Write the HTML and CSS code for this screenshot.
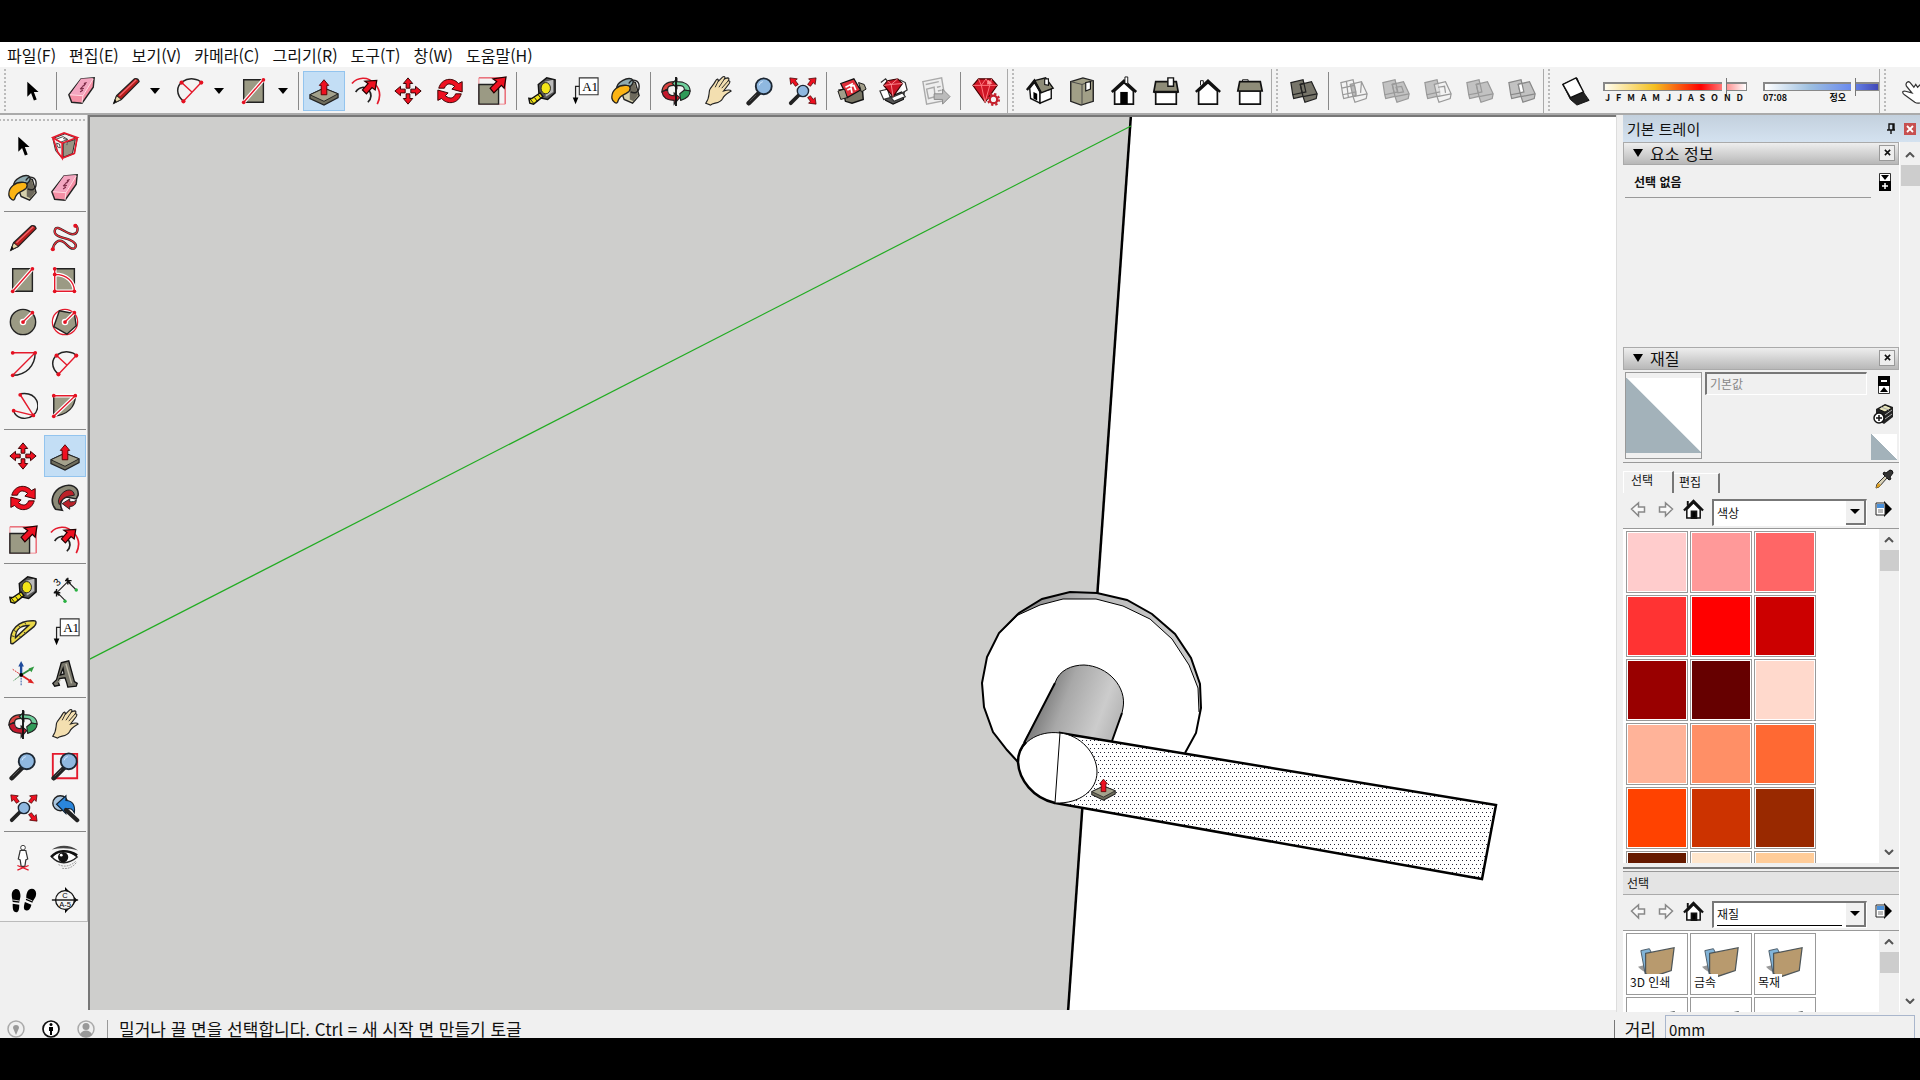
FILE: index.html
```html
<!DOCTYPE html>
<html lang="ko">
<head>
    <meta charset="UTF-8">
    <meta name="viewport" content="width=device-width, initial-scale=1.0">
    <title>SketchUp</title>
    <link rel="stylesheet" href="styles.css">
</head>
<body>

<!-- Icon set -->
<svg class="icon-set" aria-hidden="true">
    <defs>
        <g id="red-arrow"><path d="M16 2l5 6h-3v5h-4V8h-3z" fill="#ee1020" stroke="#300" stroke-width="1"/></g>
        <g id="glass"><path d="M15 18L4 29" stroke="#222" stroke-width="5" stroke-linecap="round"/><path d="M12 20l-7 7" stroke="#555" stroke-width="1"/><circle cx="20" cy="11" r="8.500" fill="#8fb8e0" stroke="#1c2733" stroke-width="2"/><path d="M15 10a5 5 0 0 1 4-4" stroke="#d8eaff" fill="none"/></g>
        <g id="big-red-arrow"><path d="M30 2l-2 12-4-3-7 8-5-5 7-8-4-3z" fill="#ee1020" stroke="#200" stroke-width="1.500"/></g>
    </defs>
    <symbol id="i-select" viewBox="0 0 32 32"><path d="M11 6v16l4-4 3 8 3-1-3-8h5z"/></symbol>
    <symbol id="i-component" viewBox="0 0 32 32"><path d="M3 8l13-5 13 5-3 16-13 5-7-8z" fill="#eee" stroke="#222"/><path d="M14 13l13-4-3 15-10 4z" fill="#999585" stroke="#222"/><path d="M6 9l8-3 5 3-8 3zM7 13l3 1 1 4-3-1zM14 8l4 1v6" fill="#fff" stroke="#444"/><path d="M3 7l12-5 14 5-16 6zM3 7l5 15 5 7V13M13 29l13-5 3-17" fill="none" stroke="#e41a2c" stroke-width="1.800"/></symbol>
    <symbol id="i-paint" viewBox="0 0 32 32"><path d="M10 14l4 11 9 4 7-8-4-14-8-3z" fill="#d6d0ac" stroke="#222" stroke-width="1.500"/><path d="M20 10l5-3 4 13-5 7-4-2z" fill="#6d695c"/><ellipse cx="15" cy="9" rx="9.500" ry="5" transform="rotate(-28 15 9)" fill="#8fabb0" stroke="#222" stroke-width="1.500"/><path d="M19 8c3-6 11-4 11 3s-5 8-9 6" fill="none" stroke="#222" stroke-width="1.500"/><path d="M17 10C8 9 0 15 1 24c1 4 5 6 6 4 2-7 5-7 10-10 5-3 4-8 0-8z" fill="#fbb414" stroke="#222" stroke-width="1.400"/></symbol>
    <symbol id="i-eraser" viewBox="0 0 32 32"><path d="M2 20L15 3l14-1-1 10-12 17-11-1z" fill="#f58fa5" stroke="#222" stroke-width="1.500"/><path d="M3 20L15 3l13-1-11 18z" fill="#f4a6c0"/><path d="M3 20l14 1L28 3M17 21l-1 8" stroke="#ffe0e6" fill="none"/><path d="M14 17l3-2M15 14l3-1M16 11l3-1M18 8l3-1M14 14l6-6" stroke="#7b2b45" stroke-width="1.200"/></symbol>
    <symbol id="i-pencil" viewBox="0 0 32 32"><path d="M3 29l3-8L25 3q4-1 5 3L11 25z" fill="#b81c1c" stroke="#222" stroke-width="1.300"/><path d="M9 21L27 4" stroke="#f0656a" stroke-width="1.500"/><path d="M3 29l3-8 5 4z" fill="#e9d9a8" stroke="#222"/><path d="M3 29l1-4 2 2z"/></symbol>
    <symbol id="i-freehand" viewBox="0 0 32 32"><path d="M3 28c1-7 6-11 11-8 5 3 7 9 12 7 4-3 0-7-5-9C12 15 4 14 5 8c2-8 12 4 19 4 6 0 7-7 3-10" fill="none" stroke="#222" stroke-width="2.500"/><path d="M3 28c1-7 6-11 11-8 5 3 7 9 12 7 4-3 0-7-5-9C12 15 4 14 5 8c2-8 12 4 19 4 6 0 7-7 3-10" fill="none" stroke="#e8303a" stroke-width="1.400"/><circle cx="3" cy="28" r="2.200" fill="#e41020"/><circle cx="27" cy="3" r="2.200" fill="#e41020"/></symbol>
    <symbol id="i-rect" viewBox="0 0 32 32"><path d="M5 4h21v24H5z" fill="#9b9a84" stroke="#222" stroke-width="1.500"/><path d="M5 28L26 4" stroke="#fff" stroke-width="4"/><path d="M5 28L26 4" stroke="#e41a2c" stroke-width="1.500"/><circle cx="5" cy="28" r="2" fill="#e41020"/><circle cx="26" cy="4" r="2" fill="#e41020"/></symbol>
    <symbol id="i-rotrect" viewBox="0 0 32 32"><path d="M5 4h21v24H5z" fill="#9b9a84" stroke="#222" stroke-width="1.500"/><path d="M5 4v24h21c0-10-8-18-21-18" fill="none" stroke="#fff" stroke-width="4"/><path d="M5 4v24h21c0-10-8-18-21-18" fill="none" stroke="#e41a2c" stroke-width="1.500"/><circle cx="5" cy="4" r="2" fill="#e41020"/><circle cx="5" cy="10" r="2" fill="#e41020"/><circle cx="5" cy="28" r="2" fill="#e41020"/><circle cx="26" cy="28" r="2" fill="#e41020"/></symbol>
    <symbol id="i-circle" viewBox="0 0 32 32"><circle cx="16" cy="16" r="13.500" fill="#9b9a84" stroke="#222" stroke-width="1.500"/><path d="M16 16L26 6" stroke="#fff" stroke-width="4"/><circle cx="16" cy="16" r="3.500" fill="#fff"/><path d="M16 16L26 6" stroke="#e41a2c" stroke-width="1.500"/><circle cx="16" cy="16" r="2" fill="#e41020"/><circle cx="26" cy="6" r="2" fill="#e41020"/></symbol>
    <symbol id="i-polygon" viewBox="0 0 32 32"><circle cx="16" cy="16" r="13.500" fill="#fff" stroke="#e41a2c" stroke-width="1.300"/><path d="M10 4l16 3 2 13-10 9-14-8z" fill="#9b9a84" stroke="#222" stroke-width="1.500"/><path d="M16 16L26 6" stroke="#fff" stroke-width="4"/><circle cx="16" cy="16" r="3.500" fill="#fff"/><path d="M16 16L26 6" stroke="#e41a2c" stroke-width="1.500"/><circle cx="16" cy="16" r="2" fill="#e41020"/><circle cx="26" cy="6" r="2" fill="#e41020"/></symbol>
    <symbol id="i-arc" viewBox="0 0 32 32"><path d="M29 4c0 14-10 24-24 24" fill="none" stroke="#222" stroke-width="1.500"/><path d="M5 28L29 4H5" fill="none" stroke="#e41a2c" stroke-width="1.500"/><circle cx="5" cy="4" r="2" fill="#e41020"/><circle cx="29" cy="4" r="2" fill="#e41020"/><circle cx="5" cy="28" r="2" fill="#e41020"/></symbol>
    <symbol id="i-arc2" viewBox="0 0 32 32"><path d="M9 27C1 20 1 11 8 6s17-3 20 1" fill="none" stroke="#222" stroke-width="1.600"/><path d="M9 27L28 7M7 7l11 10" stroke="#e41a2c" stroke-width="1.500"/><circle cx="9" cy="27" r="2.200" fill="#e41020"/><circle cx="28" cy="7" r="2.200" fill="#e41020"/><circle cx="7" cy="7" r="2.200" fill="#e41020"/></symbol>
    <symbol id="i-arc3" viewBox="0 0 32 32"><path d="M13 3c18-3 24 14 14 23-8 6-19 3-21-5" fill="none" stroke="#222" stroke-width="1.500"/><path d="M13 4l14 22-21-5" fill="none" stroke="#e41a2c" stroke-width="1.500"/><circle cx="13" cy="4" r="2" fill="#e41020"/><circle cx="27" cy="26" r="2" fill="#e41020"/><circle cx="6" cy="21" r="2" fill="#e41020"/></symbol>
    <symbol id="i-pie" viewBox="0 0 32 32"><path d="M4 5h23c0 12-8 20-23 22z" fill="#9b9a84" stroke="#222" stroke-width="1.500"/><path d="M4 5h23L4 27" fill="none" stroke="#fff" stroke-width="4"/><path d="M4 5h23L4 27" fill="none" stroke="#e41a2c" stroke-width="1.500"/><circle cx="4" cy="5" r="2" fill="#e41020"/><circle cx="27" cy="5" r="2" fill="#e41020"/><circle cx="4" cy="27" r="2" fill="#e41020"/></symbol>
    <symbol id="i-push" viewBox="0 0 32 32"><path d="M1 20l15-7 15 6v4L16 31 1 24z" fill="#6f6d5c" stroke="#222" stroke-width="1.300"/><path d="M1 20l15-7 15 6-15 8z" fill="#a4a28c" stroke="#222"/><path d="M16 4l5 6h-2v10h-6V10h-2z" fill="#ee1020" stroke="#500" stroke-width="1"/></symbol>
    <symbol id="i-offset" viewBox="0 0 32 32"><path d="M1 8c6-7 17-8 24 0 6 6 7 14 3 22" fill="none" stroke="#e41a2c" stroke-width="1.800"/><path d="M5 17c4-6 10-6 14-2 3 4 3 9-1 13" fill="none" stroke="#222" stroke-width="1.800"/><use href="#big-red-arrow" transform="translate(2 3) scale(.85)"/></symbol>
    <symbol id="i-move" viewBox="0 0 32 32"><use href="#red-arrow"/><use href="#red-arrow" transform="rotate(90 16 16)"/><use href="#red-arrow" transform="rotate(180 16 16)"/><use href="#red-arrow" transform="rotate(270 16 16)"/></symbol>
    <symbol id="i-rotate" viewBox="0 0 32 32"><path id="rot" d="M4 13C7 2 19 1 25 8l4-2v11l-11-3 3-3c-5-4-9-3-11 2z" fill="#ee1020" stroke="#300" stroke-width="1"/><use href="#rot" transform="rotate(180 16 16)"/></symbol>
    <symbol id="i-scale" viewBox="0 0 32 32"><path d="M2 2h28v28" fill="none" stroke="#e41a2c"/><path d="M2 2v28h28" fill="none" stroke="#f08890"/><path d="M2 9h21v21H2z" fill="#9b9a84" stroke="#222" stroke-width="1.500"/><path d="M31 1l-2 12-3-3-8 8-4-5 7-7-4-3z" fill="#ee1020" stroke="#200" stroke-width="1.300"/></symbol>
    <symbol id="i-followme" viewBox="0 0 32 32"><path d="M30 13C31 4 22 0 13 4 3 8-1 20 6 28l7 1c-3-5-2-12 5-14l10 2z" fill="#8c8a78" stroke="#222" stroke-width="1.700"/><path d="M26 13c-1-7-8-7-13-2-4 5-5 9-3 12 2-6 6-8 10-9z" fill="#bb2229" stroke="#222"/><path d="M13 22l8-5v3c3 0 6 0 7-2 0 5-3 7-7 7v3z" fill="#bb2229" stroke="#222"/></symbol>
    <symbol id="i-tape" viewBox="0 0 32 32"><path d="M12 9l9-7 9 2v14l-8 7-9-2z" fill="#555" stroke="#111" stroke-width="1.500"/><path d="M19 6l9-2v13l-8 5z" fill="#bbb"/><ellipse cx="20" cy="13" rx="5" ry="6" fill="#f2e418" stroke="#222"/><path d="M14 18l3 4-10 8-4-1-1-5h3z" fill="#f2e418" stroke="#111" stroke-width="1.500"/><path d="M2 23l5 6M8 23l3 4M12 20l3 4" stroke="#111"/></symbol>
    <symbol id="i-dim" viewBox="0 0 32 32"><path d="M7 19L19 7M18 6l10 10M7 18l9 9" stroke="#222" stroke-width="1.200"/><path d="M4 19h7M7 15v8M5 17l5 5M16 6h7M19 3v7M17 4l5 5" stroke="#111" stroke-width="1.500"/><circle cx="28" cy="16" r="1.800" fill="#28b040"/><circle cx="16" cy="28" r="1.800" fill="#28b040"/><text x="4" y="11" font-family="Liberation Sans" font-size="11" transform="rotate(-45 8 7)">3</text></symbol>
    <symbol id="i-protractor" viewBox="0 0 32 32"><path fill-rule="evenodd" d="M3 28C1 14 11 3 28 4c3 0 2 4 0 6L6 28q-2 1-3 0zM8 22L22 9C13 9 8 14 8 22z" fill="#ead84a" stroke="#222" stroke-width="1.500"/><path d="M4 20l3 1M6 14l3 2M11 9l2 2M18 6l1 2M12 20l2 2M17 16l2 2" stroke="#333"/></symbol>
    <symbol id="i-text" viewBox="0 0 32 32"><path d="M11 2h20v18H11z" fill="#fff" stroke="#333" stroke-width="1.200"/><path d="M11 11H7v13" fill="none" stroke="#222" stroke-width="1.300"/><path d="M4 23h6l-3 7z"/><text x="14" y="16" font-family="Liberation Serif" font-size="14">A1</text></symbol>
    <symbol id="i-axes" viewBox="0 0 32 32"><path d="M14 17V6" stroke="#1e4b9c" stroke-width="2.500"/><path d="M14 2l3 6h-6z" fill="#1e4b9c"/><path d="M14 17l10-6" stroke="#2f8a3f" stroke-width="2"/><path d="M28 8l-3 6-3-4z" fill="#2f9a3f"/><path d="M14 17l9 6" stroke="#d22" stroke-width="2"/><path d="M28 26l-7-1 3-4z" fill="#d22"/><path d="M14 17v11" stroke="#1e4b9c" stroke-dasharray="2 1"/><path d="M14 17l-8 6" stroke="#2f8a3f" stroke-dasharray="2 1"/><path d="M14 17l-9-6" stroke="#d22" stroke-dasharray="2 1"/><circle cx="14" cy="17" r="2"/></symbol>
    <symbol id="i-3dtext" viewBox="0 0 32 32"><path fill-rule="evenodd" d="M12 4l8-2 6 22 3 2-1 3-9 1-1-4-2-6-6 1-1 4 1 3-5 1-2-3 4-4zM14 10l-3 7 4-1z" fill="#77756a" stroke="#111" stroke-width="1.400"/><path d="M17 5l6 21M11 22l-2 3" stroke="#bdb9a8" stroke-width="1.500"/></symbol>
    <symbol id="i-orbit" viewBox="0 0 32 32"><path d="M14 6C5 6 1 11 1 17l6-3c0-3 3-4 7-4z" fill="#d9433f" stroke="#222" stroke-width="1.200"/><path d="M1 17c1 6 5 9 13 9v4l6-7-6-5v3c-6 0-7-3-7-7z" fill="#c4182c" stroke="#222" stroke-width="1.200"/><path d="M17 6v-3l-5 5 5 5v-3c6 0 8 1 8 5l6 1c0-7-6-10-14-10z" fill="#6fcf9c" stroke="#222" stroke-width="1.200"/><path d="M25 15l-5 4 1 7c7-2 10-6 10-10z" fill="#2f9a58" stroke="#222" stroke-width="1.200"/><path d="M16 1v31" stroke="#111" stroke-width="2"/></symbol>
    <symbol id="i-hand" viewBox="0 0 32 32"><path d="M3 29c4-5 3-9 4-14 1-3 4-5 6-9 2-4 4-3 3 0l5-5c2-1 3 0 2 2l3-1c2 0 2 1 1 3 2 0 2 1 1 3l-6 8c3-1 7-2 8 0-5 3-8 5-9 8-3 6-10 4-13 7z" fill="#f3dfb0" stroke="#222" stroke-width="1.200"/><path d="M16 6l-3 6M23 3l-6 9M27 5l-7 8" stroke="#222"/></symbol>
    <symbol id="i-zoom" viewBox="0 0 32 32"><use href="#glass"/></symbol>
    <symbol id="i-zoomwin" viewBox="0 0 32 32"><path d="M3 3h26v26H3z" fill="none" stroke="#e41a2c" stroke-width="2"/><use href="#glass"/></symbol>
    <symbol id="i-extents" viewBox="0 0 32 32"><path d="M13 20L4 29" stroke="#222" stroke-width="4" stroke-linecap="round"/><circle cx="17" cy="16" r="6" fill="#8fb8e0" stroke="#1c2733" stroke-width="1.500"/><g fill="#ee1020" stroke="#400" stroke-width=".8"><path d="M3 2l8 1-2 2 3 4-3 2-3-4-2 2z"/><path d="M31 2l-8 1 2 2-3 4 3 2 3-4 2 2z"/><path d="M31 30l-8-1 2-2-3-4 3-2 3 4 2-2z"/></g></symbol>
    <symbol id="i-prev" viewBox="0 0 32 32"><circle cx="11" cy="11" r="8" fill="#a9c6e0" stroke="#222" stroke-width="1.500"/><path d="M7 12l10-9v5c7 0 10 5 9 13-2-4-4-5-9-4v5z" fill="#2a86dd" stroke="#123" stroke-width="1.200"/><path d="M17 18l12 11" stroke="#222" stroke-width="4.500" stroke-linecap="round"/></symbol>
    <symbol id="i-position" viewBox="0 0 32 32"><circle cx="16" cy="5" r="2.500" fill="#fff" stroke="#333"/><path d="M13 8h6l2 9-2 1-1 7h-4l-1-7-2-1z" fill="#fff" stroke="#333" stroke-width="1.300"/><path d="M10 29l12-5M10 24l12 5" stroke="#e41a2c" stroke-width="1.400"/></symbol>
    <symbol id="i-look" viewBox="0 0 32 32"><path d="M2 7C9 2 20 1 30 8 20 5 11 5 2 7z" fill="#444"/><path d="M2 15c7-8 18-8 27 0-9 8-20 8-27 0z" fill="#fff" stroke="#222" stroke-width="1.500"/><path d="M1 15c7-8 18-8 28-2" fill="none" stroke="#111" stroke-width="2.500"/><circle cx="14" cy="15" r="5.500" fill="#111"/><circle cx="12" cy="13" r="1.500" fill="#fff"/><path d="M9 23c6 3 13 2 19-4M13 27c6 1 11-1 15-6" stroke="#999" fill="none" stroke-dasharray="2 1"/></symbol>
    <symbol id="i-walk" viewBox="0 0 32 32"><path d="M4 11c0-8 8-9 9-2 1 5-1 6-1 10l-7-1c0-3-1-4-1-7zM5 20l7 1c0 6-1 8-3 8-4 0-4-4-4-9z"/><path d="M20 9c2-7 10-6 10 0 0 5-3 6-4 10l-7-3c1-3 0-4 1-7zM18 18l7 3c-1 5-4 7-6 6-3-1-2-5-1-9z"/><path d="M5 16l7 1M19 14l7 3" stroke="#ddd"/></symbol>
    <symbol id="i-section" viewBox="0 0 32 32"><path d="M16 2l13 14-13 14z"/><circle cx="16" cy="16" r="10" fill="#f4f4f4" stroke="#111" stroke-width="1.400"/><path d="M2 16h28" stroke="#111" stroke-width="1.500"/><text x="16" y="14" font-family="Liberation Sans" font-size="8" text-anchor="middle">C</text><text x="16" y="23" font-family="Liberation Sans" font-size="8" text-anchor="middle">A-5</text></symbol>
    <symbol id="i-warehouse" viewBox="0 0 32 32"><path d="M3 15l4 3 2 9 7 2 12-4-1-13z" fill="#777463" stroke="#111" stroke-width="1.500"/><path d="M4 8l14-5 7 12-14 8z" fill="#e0303a" stroke="#111" stroke-width="1.300"/><path d="M9 12l8-4M14 11l4-1 2 5M11 15l4-2 1 5" stroke="#fff" stroke-width="1.800" fill="none"/><path d="M1 16l7-2 3 9-7 2zM23 7l6 2 2 5-5 3z" fill="#a19d89" stroke="#111"/></symbol>
    <symbol id="i-extwh" viewBox="0 0 32 32"><path d="M4 17l8 5 15-6-1 9-11 5-8-4z" fill="#555" stroke="#111" stroke-width="1.300"/><path d="M2 7l5-4 4 5M22 4l6 3 2 8-5 3M1 16l8-2 3 9-7 2zM13 23l12-5 3 4-12 5z" fill="#fff" stroke="#333" stroke-width="1.300"/><path d="M5 10l4-5 11-2 5 5-10 14z" fill="#c81424" stroke="#300" stroke-width="1.200"/><path d="M5 10l8-1 12-1M9 5l4 4 2 13M20 3l-7 6" stroke="#ff8a90" fill="none"/></symbol>
    <symbol id="i-layout" viewBox="0 0 32 32"><path d="M2 6l20-4 4 24-20 4z" fill="#eee" stroke="#aaa" stroke-width="1.500"/><path d="M5 9l14-3M6 14l8-2 1 10-7 2zM17 12l4-1M18 16l4-1" stroke="#aaa" stroke-width="1.500" fill="none"/><path d="M14 19h9v-5l8 8-8 8v-5h-9z" fill="#bbb" stroke="#888"/></symbol>
    <symbol id="i-extmgr" viewBox="0 0 32 32"><path d="M2 10l6-7h14l6 7-13 18z" fill="#cf1525" stroke="#400" stroke-width="1.200"/><path d="M2 10h26M8 3l3 7 4 18 5-18 2-7M11 10l5-7 4 7" stroke="#ff7a80" fill="none"/><path d="M18 4l5 4-6 1z" fill="#f99"/><circle cx="24" cy="25" r="4" fill="#f3f3f3" stroke="#c4202c" stroke-width="2.500"/><circle cx="24" cy="25" r="6" fill="none" stroke="#c4202c" stroke-width="2" stroke-dasharray="2.500 2.200"/></symbol>
    <symbol id="i-iso" viewBox="0 0 32 32"><path d="M5 13l5-6 6 9v13l-10-5z" fill="#fff" stroke="#111" stroke-width="1.500"/><path d="M16 17l12-3v10l-12 5z" fill="#fff" stroke="#111" stroke-width="1.500"/><path d="M10 5l12-3 8 11-13 5z" fill="#8e8c78" stroke="#111" stroke-width="1.500"/><path d="M2 15l8-10 7 13" fill="none" stroke="#111" stroke-width="2.500"/><path d="M21 3h4v7l-4-1z" fill="#fff" stroke="#111" stroke-width="1.200"/><path d="M9 17l4 2v7l-4-2z"/></symbol>
    <symbol id="i-top" viewBox="0 0 32 32"><path d="M4 6l13-4 11 3v22l-13 4-11-4z" fill="#a19f87" stroke="#222" stroke-width="1.500"/><path d="M4 6l12 3v22M16 9l12-4" fill="none" stroke="#444"/><path d="M20 7l5-1v8l-5 2z" fill="#fff" stroke="#111" stroke-width="1.200"/></symbol>
    <symbol id="i-front" viewBox="0 0 32 32"><path d="M6 16L16 7l10 9v14H6z" fill="#fff" stroke="#111" stroke-width="1.800"/><path d="M3 17L16 5l13 12" fill="none" stroke="#111" stroke-width="2.800"/><path d="M12 17h8v13h-8z"/><path d="M17 7V1h3v7" fill="#fff" stroke="#111"/></symbol>
    <symbol id="i-right" viewBox="0 0 32 32"><path d="M5 16h22v14H5z" fill="#fff" stroke="#111" stroke-width="1.800"/><path d="M5 6h22l2 11H3z" fill="#8e8c78" stroke="#111" stroke-width="1.800"/><path d="M3 17h26" stroke="#111" stroke-width="2.500"/><path d="M18 2h6v9h-6z" fill="#fff" stroke="#111" stroke-width="1.500"/></symbol>
    <symbol id="i-back" viewBox="0 0 32 32"><path d="M8 10V5h3v4" fill="#fff" stroke="#111"/><path d="M6 16L16 7l10 9v14H6z" fill="#fff" stroke="#111" stroke-width="1.800"/><path d="M3 17L16 5l13 12" fill="none" stroke="#111" stroke-width="2.500"/></symbol>
    <symbol id="i-left" viewBox="0 0 32 32"><path d="M5 16h22v14H5z" fill="#fff" stroke="#111" stroke-width="1.800"/><path d="M8 4h6v3H8z" stroke="#111" fill="#fff"/><path d="M5 6h22l2 10H3z" fill="#8e8c78" stroke="#111" stroke-width="1.800"/></symbol>
    <symbol id="i-shell" viewBox="0 0 32 32"><g fill="#77756a" stroke="#222" stroke-width="1.300"><path d="M2 7l13-3 3 13v4L5 24l-1-4z"/><path d="M12 9l12-3 6 13-1 5-12 4-2-6z"/><path d="M4 20l14-3M15 22l15-3M12 9l4-1 2 9-4 1z" fill="none"/></g></symbol>
    <symbol id="i-intersect" viewBox="0 0 32 32"><path d="M12 9l5-1 2 13-4 2z" fill="#bbb"/><g fill="none" stroke="#999" stroke-width="1.300"><path d="M2 7l13-3 3 13v4L5 24l-1-4zM4 20l14-3M8 6l2 17M3 13l13-3"/><path d="M12 9l12-3 6 13-1 5-12 4-2-6zM15 22l15-3M24 6l-1 12"/></g></symbol>
    <symbol id="i-union" viewBox="0 0 32 32"><g fill="#c2c2c2" stroke="#999" stroke-width="1.300"><path d="M2 7l13-3 3 13v4L5 24l-1-4z"/><path d="M12 9l12-3 6 13-1 5-12 4-2-6z"/><path d="M4 20l14-3M15 22l15-3M12 9l4-1 2 9-4 1zM16 12l6-1 2 6-6 1z" fill="none"/></g></symbol>
    <symbol id="i-subtract" viewBox="0 0 32 32"><path d="M2 7l13-3 3 13v4L5 24l-1-4z" fill="#c2c2c2" stroke="#999" stroke-width="1.300"/><path d="M12 9l12-3 6 13-1 5-12 4-2-6zM15 22l15-3M4 20l14-3M16 12l7-1 1 7" fill="#f3f3f3" fill-opacity=".6" stroke="#999" stroke-width="1.300"/></symbol>
    <symbol id="i-trim" viewBox="0 0 32 32"><g fill="#c2c2c2" stroke="#999" stroke-width="1.300"><path d="M2 7l13-3 3 13v4L5 24l-1-4z"/><path d="M12 9l12-3 6 13-1 5-12 4-2-6z"/><path d="M4 20l11-2M15 22l15-3M12 9l4-1 2 9-4 1z" fill="none"/></g></symbol>
    <symbol id="i-split" viewBox="0 0 32 32"><g fill="#c2c2c2" stroke="#888" stroke-width="1.300"><path d="M2 7l13-3 3 13v4L5 24l-1-4z"/><path d="M12 9l12-3 6 13-1 5-12 4-2-6z"/><path d="M4 20l11-2M15 22l15-3"/><path d="M12 9l4-1 2 9-4 1z" fill="#fff"/></g></symbol>
    <symbol id="i-shadow" viewBox="0 0 32 32"><path d="M2 9l15-7 6 14 7 10-13 5-7-6z" fill="#222" stroke="#111"/><path d="M2 9l14-7 8 15-14 6z" fill="#fff" stroke="#111" stroke-width="1.500"/></symbol>
    <symbol id="i-touch" viewBox="0 0 32 32"><path d="M12 6c-3 1-3 4-1 6l5 6-8-2c-3 0-2 3 0 4l11 8c3 2 6 1 9-1V12l-3-3-3 3-2-3-2 3-4-5q-1-1-2-1z" fill="#fff" stroke="#333" stroke-width="1.300"/></symbol>
    <symbol id="i-home" viewBox="0 0 22 22"><path d="M4 11v9h14v-9L11 4z" fill="#fff" stroke="#111" stroke-width="1.600"/><path d="M1 12L11 2l10 10" fill="none" stroke="#111" stroke-width="2.400"/><path d="M5 2v5M9 13h5v7H9z" stroke="#111" stroke-width="2"/></symbol>
    <symbol id="i-navleft" viewBox="0 0 18 18"><path d="M2 9l7-6v4h6v5H9v4z" fill="#f8f8f8" stroke="#888" stroke-width="1.500"/></symbol>
    <symbol id="i-detail" viewBox="0 0 18 18"><path d="M9 1l8 8-8 8z"/><path d="M1 3h9v12H1z" fill="#fff" stroke="#222"/><path d="M2 4h7v4H2z" fill="#4a90d9"/><path d="M3 10h5M3 12h5" stroke="#777"/></symbol>
    <symbol id="i-dropper" viewBox="0 0 22 22"><path d="M13 5l4-3q3 0 3 3l-3 4 1 2-2 1-6-6 1-2z" fill="#333" stroke="#111"/><path d="M12 8l2 2-8 9-3 1 1-4z" fill="#d9d2b8" stroke="#333"/><path d="M5 15l3 2-2 2-3 1z" fill="#e0a020"/></symbol>
    <symbol id="i-newmat" viewBox="0 0 22 22"><path d="M3 6l9-5 8 3v10l-9 7-8-5z" fill="#222"/><path d="M5 6l7-4 7 3-7 4z" fill="#e5e3b8" stroke="#111"/><path d="M8 4l8 3M12 12l7-5M12 16l7-5" stroke="#aaa"/><circle cx="6" cy="15" r="5" fill="#fff" stroke="#111" stroke-width="1.500"/><path d="M6 12v6M3 15h6" stroke="#111" stroke-width="1.500"/></symbol>
    <symbol id="i-expand" viewBox="0 0 12 18"><path d="M.5.5h11v17H.5z" fill="#fff" stroke="#333"/><path d="M0 8h12v10H0zM2 2h8L6 7z"/><path d="M6 10v6M3 13h6" stroke="#fff" stroke-width="1.500"/></symbol>
    <symbol id="i-collapse" viewBox="0 0 12 18"><path d="M.5.5h11v17H.5z" fill="#fff" stroke="#333"/><path d="M0 0h12v10H0zM2 16h8l-4-5z"/><path d="M3 5h6" stroke="#fff" stroke-width="2"/></symbol>
    <symbol id="i-folder" viewBox="0 0 40 32"><path d="M0 21l8-2 6 10q-9-2-14-8z" fill="#999"/><path d="M3 4l9-2 2 4 6 24-12 1z" fill="#82b4d8" stroke="#4a5a66"/><path d="M8 7l30-6-3 24-21 7-6-4z" fill="#b89a6e" stroke="#4d5558" stroke-width="1.300"/></symbol>
    <symbol id="i-up" viewBox="0 0 10 6"><path d="M1 5l4-4 4 4" fill="none" stroke="#555" stroke-width="2"/></symbol>
    <symbol id="i-pin" viewBox="0 0 10 12"><path d="M3 1h5v6H3zM1 7h8M5 7v4M7 1v6" fill="none" stroke="#111" stroke-width="1.400"/></symbol>
    <symbol id="i-x" viewBox="0 0 8 8"><path d="M1 1l6 6M7 1L1 7" stroke="currentColor" stroke-width="1.800"/></symbol>
    <symbol id="i-geo" viewBox="0 0 18 18"><circle cx="9" cy="9" r="8" fill="none" stroke="#aaa" stroke-width="1.500"/><path d="M9 15L6 8a3 3 0 1 1 6 0z" fill="#999"/></symbol>
    <symbol id="i-credit" viewBox="0 0 18 18"><circle cx="9" cy="9" r="8" fill="#fff" stroke="#111" stroke-width="1.700"/><circle cx="9" cy="4.500" r="1.500"/><path d="M7 7h4v4h-1v4H8v-4H7z"/></symbol>
    <symbol id="i-user" viewBox="0 0 18 18"><circle cx="9" cy="9" r="8" fill="none" stroke="#aaa" stroke-width="1.500"/><circle cx="9" cy="6.500" r="3.500" fill="#999"/><path d="M3 15c1-6 11-6 12 0q-6 5-12 0z" fill="#999"/></symbol>
</svg>

<div class="app">
    <nav class="menu">
        <a href="#">파일(F)</a>
        <a href="#">편집(E)</a>
        <a href="#">보기(V)</a>
        <a href="#">카메라(C)</a>
        <a href="#">그리기(R)</a>
        <a href="#">도구(T)</a>
        <a href="#">창(W)</a>
        <a href="#">도움말(H)</a>
    </nav>

    <div class="toolbars">
        <div class="toolbar" data-tools="select | eraser pencil+ arc2+ rect+ | push* offset move rotate scale | tape text paint | orbit hand zoom extents | warehouse extwh layout | extmgr"></div>
        <div class="toolbar" data-tools="iso top front right back left"></div>
        <div class="toolbar" data-tools="shell | intersect union subtract trim split"></div>
        <div class="toolbar">
            <button class="tool" aria-label="shadow"><svg><use href="#i-shadow"/></svg></button>
            <div class="slider date">
                <input type="range" min="1" max="365" value="314" aria-label="date">
                <div class="months"><span>J</span><span>F</span><span>M</span><span>A</span><span>M</span><span>J</span><span>J</span><span>A</span><span>S</span><span>O</span><span>N</span><span>D</span></div>
            </div>
            <div class="slider time">
                <input type="range" min="0" max="100" value="80" aria-label="time">
                <div class="hours"><span>07:08</span><span>정오</span></div>
            </div>
        </div>
        <div class="toolbar last">
            <button class="tool" aria-label="touch"><svg><use href="#i-touch"/></svg></button>
        </div>
    </div>

    <div class="main">
        <div class="side">
            <div class="palette" data-tools="select component paint eraser | pencil freehand rect rotrect circle polygon arc arc2 arc3 pie | move push* rotate followme scale offset | tape dim protractor text axes 3dtext | orbit hand zoom zoomwin extents prev | position look walk section"></div>
        </div>

        <div class="canvas">
            <svg viewBox="90 117 1526 893" preserveAspectRatio="xMinYMin slice">
                <defs>
                    <pattern id="dots" width="4" height="8" patternUnits="userSpaceOnUse">
                        <rect width="4" height="8" fill="#fff"/>
                        <rect width="1" height="1" fill="#223"/>
                        <rect x="2" y="4" width="1" height="1" fill="#223"/>
                    </pattern>
                    <linearGradient id="shaft" gradientUnits="userSpaceOnUse" x1="1038" y1="700" x2="1118" y2="730">
                        <stop offset="0" stop-color="#777"/>
                        <stop offset=".3" stop-color="#a8a8a8"/>
                        <stop offset=".75" stop-color="#ccc"/>
                        <stop offset="1" stop-color="#b4b4b4"/>
                    </linearGradient>
                    <linearGradient id="rim" x1="0" y1="0" x2="1" y2="0">
                        <stop offset=".1" stop-color="#777"/>
                        <stop offset=".5" stop-color="#bbb"/>
                        <stop offset="1" stop-color="#ccc"/>
                    </linearGradient>
                </defs>
                <!-- door face -->
                <path d="M80 100H1132L1068 1012H80z" fill="#cececc"/>
                <path d="M1132 100L1068 1012" stroke="#000" stroke-width="2.500"/>
                <path d="M88 660L1131 126" stroke="#22ac22" stroke-width="1.200"/>
                <!-- plate -->
                <path d="M1018 762L1007 750 993 732 984 707 982 683 987 657 999 633 1019 613 1042 599 1070 592 1097 593 1127 600 1152 614 1175 634 1191 658 1200 684 1201 708 1196 733 1185 753 1120 790z" fill="url(#rim)"/>
                <path d="M1018 762L1007 750 993 732 984 707 982 683 987 657 999 633 1018 615 1040 605 1063 599 1096 599 1123 606 1150 619 1172 639 1189 665 1198 688 1199 712 1196 733 1185 753 1120 790z" fill="#fff"/>
                <path d="M999 633L1018 615 1040 605 1063 599 1096 599 1123 606 1150 619 1172 639 1189 665 1198 688 1199 712" fill="none" stroke="#000"/>
                <path d="M1018 762L1007 750 993 732 984 707 982 683 987 657 999 633 1019 613 1042 599 1070 592 1097 593 1127 600 1152 614 1175 634 1191 658 1200 684 1201 708 1196 733 1185 753" fill="none" stroke="#000" stroke-width="2"/>
                <!-- shaft -->
                <path d="M1022 745L1055 683C1059 670 1072 665 1084 665 1108 666 1127 687 1123 708L1122 713 1111 745 1060 760z" fill="url(#shaft)"/>
                <path d="M1055 683C1059 670 1072 665 1084 665 1108 666 1127 687 1123 708L1122 713" fill="none" stroke="#000"/>
                <path d="M1122 713L1112 741M1055 683L1024 743" stroke="#000" stroke-width="2"/>
                <!-- handle -->
                <path d="M1060 733L1496 805 1482 879 1055 803z" fill="url(#dots)" stroke="#000" stroke-width="2.500"/>
                <path d="M1060 733C1080 735 1097 753 1097 772 1097 790 1080 804 1055 803 1033 798 1019 780 1018 762 1018 743 1038 730 1060 733z" fill="#fff" stroke="#000"/>
                <path d="M1055 803C1033 798 1019 780 1018 762 1018 755 1020 748 1026 742" fill="none" stroke="#000" stroke-width="2.500"/>
                <path d="M1060 733L1055 803" stroke="#000"/>
                <use href="#i-push" x="1091" y="776" width="25" height="25"/>
            </svg>
        </div>

        <aside class="tray">
            <div class="tray-title">
                <span>기본 트레이</span>
                <button class="pin" aria-label="pin"><svg><use href="#i-pin"/></svg></button>
                <button class="close-red" aria-label="close"><svg><use href="#i-x"/></svg></button>
            </div>
            <div class="tray-body">
                <div class="panels">
                    <h2 class="panel-head"><span class="tri"></span>요소 정보<button aria-label="close"><svg><use href="#i-x"/></svg></button></h2>
                    <div class="entity">
                        <p>선택 없음</p>
                        <svg class="toggle"><use href="#i-expand"/></svg>
                    </div>

                    <h2 class="panel-head"><span class="tri"></span>재질<button aria-label="close"><svg><use href="#i-x"/></svg></button></h2>
                    <div class="material">
                        <div class="preview"><div class="half"></div></div>
                        <input type="text" value="기본값" aria-label="material name" disabled>
                        <div class="material-side">
                            <svg class="toggle"><use href="#i-collapse"/></svg>
                            <svg class="newmat"><use href="#i-newmat"/></svg>
                            <div class="half small"></div>
                        </div>
                    </div>
                    <div class="tabs">
                        <button class="tab active">선택</button>
                        <button class="tab">편집</button>
                        <svg class="dropper"><use href="#i-dropper"/></svg>
                    </div>
                    <div class="nav">
                        <svg class="arrow"><use href="#i-navleft"/></svg>
                        <svg class="arrow flip"><use href="#i-navleft"/></svg>
                        <svg class="home"><use href="#i-home"/></svg>
                        <label class="combo"><select aria-label="library"><option>색상</option></select><span class="drop"></span></label>
                        <svg class="detail"><use href="#i-detail"/></svg>
                    </div>
                    <div class="list colors">
                        <div class="cells" id="swatches"></div>
                        <div class="scroll"><svg><use href="#i-up"/></svg><div class="thumb"></div><svg class="down"><use href="#i-up"/></svg></div>
                    </div>
                    <div class="split-bar"></div>
                    <div class="sub-head">선택</div>
                    <div class="nav">
                        <svg class="arrow"><use href="#i-navleft"/></svg>
                        <svg class="arrow flip"><use href="#i-navleft"/></svg>
                        <svg class="home"><use href="#i-home"/></svg>
                        <label class="combo line"><select aria-label="folder"><option>재질</option></select><span class="drop"></span></label>
                        <svg class="detail"><use href="#i-detail"/></svg>
                    </div>
                    <div class="list folders">
                        <div class="cells" id="folders"></div>
                        <div class="scroll"><svg><use href="#i-up"/></svg><div class="thumb"></div></div>
                    </div>
                </div>
                <div class="scroll outer"><svg><use href="#i-up"/></svg><div class="thumb"></div><svg class="down"><use href="#i-up"/></svg></div>
            </div>
        </aside>
    </div>

    <footer class="status">
        <svg><use href="#i-geo"/></svg>
        <svg><use href="#i-credit"/></svg>
        <svg><use href="#i-user"/></svg>
        <p>밀거나 끌 면을 선택합니다. Ctrl = 새 시작 면 만들기 토글</p>
        <label for="distance">거리</label>
        <input type="text" id="distance" value="0mm">
    </footer>
</div>

<script>
// "|" separator, "+" drop-down arrow, "*" active tool
document.querySelectorAll('[data-tools]').forEach(bar => {
    bar.innerHTML = bar.dataset.tools.split(' ').map(item => {
        if (item === '|') return '<span class="sep"></span>';
        const name = item.replace(/[+*]/, '');
        const active = item.endsWith('*') ? ' active' : '';
        const button = `<button class="tool${active}" aria-label="${name}"><svg><use href="#i-${name}"/></svg></button>`;
        if (item.endsWith('+')) {
            return `<span class="split">${button}<button class="caret" aria-label="${name} menu"></button></span>`;
        }
        return button;
    }).join('');
});

const colors = [
    '#ffcccc', '#ff9999', '#ff6666', '#ff3333', '#ff0000', '#cc0000',
    '#990000', '#660000', '#ffd9cc', '#ffb399', '#ff8f66', '#ff6933',
    '#ff4200', '#cc3300', '#992900', '#661a00', '#ffe6cc', '#ffcc99'
];
document.getElementById('swatches').innerHTML = colors.map(c =>
    `<button class="cell" aria-label="${c}"><span class="color" style="background:${c}"></span></button>`
).join('');

const folders = ['3D 인쇄', '금속', '목재', '', '', ''];
document.getElementById('folders').innerHTML = folders.map(f =>
    `<button class="cell folder"><svg><use href="#i-folder"/></svg>${f ? `<span>${f}</span>` : ''}</button>`
).join('');
</script>

</body>
</html>
```
FILE: styles.css
```css
* {
    box-sizing: border-box;
}
body {
    margin: 0;
    background: #000;
    color: #111;
    font-family: "Noto Sans CJK KR", "Noto Sans", sans-serif;
    font-size: 12px;
}
button, input, select {
    font: inherit;
    color: inherit;
    padding: 0;
    border: none;
    border-radius: 0;
    background: none;
}
p, h2 {
    margin: 0;
    font-weight: normal;
}
svg {
    display: block;
    flex: none;
}
.icon-set {
    display: none;
}
.app {
    display: flex;
    flex-direction: column;
    height: 100vh;
    padding: 42px 0;
    overflow: hidden;
}

/* menu */
.menu {
    display: flex;
    flex: none;
    gap: 13px;
    height: 25px;
    padding: 0 7px;
    background: #fff;
    font-size: 16px;
    line-height: 26px;
}
.menu a {
    color: #111;
    text-decoration: none;
    white-space: nowrap;
}

/* toolbars */
.toolbars {
    display: flex;
    flex: none;
    height: 48px;
    padding-top: 2px;
    background: #f3f3f3;
    border-bottom: 2px solid #aaa;
    overflow: hidden;
}
.toolbar {
    display: flex;
    flex: none;
    align-items: center;
    padding-left: 11px;
    border-right: 1px solid #aaa;
    background: radial-gradient(circle, #bbb 1px, transparent 1px) 3px 3px / 4px 4px repeat-y;
}
.tool {
    display: flex;
    flex: none;
    align-items: center;
    justify-content: center;
    width: 42px;
    height: 40px;
}
.tool svg {
    width: 30px;
    height: 30px;
}
.tool.active {
    background: #c3def5;
    border: 1px solid #93c4ee;
}
.sep {
    flex: none;
    width: 1px;
    height: 38px;
    margin: 0 4px 0 3px;
    background: #888;
}
.split {
    display: flex;
    align-items: center;
    width: 64px;
    padding-left: 2px;
}
.caret {
    width: 16px;
    height: 20px;
}
.caret::before {
    content: "";
    display: block;
    width: 0;
    margin: 0 auto;
    border: 5px solid transparent;
    border-top: 6px solid #000;
    border-bottom: 0;
}
.toolbar.last {
    border-right: none;
}
.slider {
    padding-top: 4px;
    margin-left: 6px;
    font-size: 9px;
    font-weight: bold;
}
.slider input {
    display: block;
    width: 100%;
    height: 9px;
    margin: 0;
    appearance: none;
    border: 1px solid #888;
    border-width: 2px 1px 1px 2px;
}
.slider input::-webkit-slider-thumb {
    appearance: none;
    width: 5px;
    height: 18px;
    background: #f3f3f3;
    border-right: 1px solid #777;
}
.date {
    width: 144px;
}
.date input {
    background: linear-gradient(90deg, #fffdf0, #f4c020 35%, #f00 68%, #fff);
}
.time {
    width: 116px;
    margin-left: 16px;
}
.time input {
    background: linear-gradient(90deg, #fff, #9dbfe0 40%, #6c8cee 75%, #4048b8);
}
.months, .hours {
    display: flex;
    justify-content: space-between;
    padding: 0 4px 0 2px;
    line-height: 14px;
}
.hours {
    padding: 0 33px 0 0;
}

/* left palette */
.main {
    display: flex;
    flex: 1;
    min-height: 0;
    background: #f0f0f0;
}
.side {
    flex: none;
    width: 88px;
}
.palette {
    display: grid;
    grid-template-columns: 42px 42px;
    padding: 10px 2px 0;
    border-right: 1px solid #bbb;
    border-bottom: 1px solid #bbb;
    background: radial-gradient(circle, #bbb 1px, transparent 1px) 2px 3px / 4px 4px repeat-x #f4f4f4;
}
.palette .tool {
    height: 42px;
}
.palette .sep {
    grid-column: span 2;
    width: auto;
    height: 1px;
    margin: 2px 0 5px 2px;
}

/* model view */
.canvas {
    flex: 1;
    min-width: 0;
    margin-bottom: 2px;
    border-left: 2px solid #777;
    border-top: 2px solid #777;
    background: #fff;
}
.canvas svg {
    width: 100%;
    height: 100%;
}

/* tray */
.tray {
    display: flex;
    flex-direction: column;
    flex: none;
    width: 304px;
    padding-left: 6px;
    border-left: 1px solid #ddd;
}
.tray-title {
    display: flex;
    align-items: center;
    flex: none;
    height: 27px;
    padding: 0 4px;
    background: linear-gradient(#c3d0dd, #d4e2f0);
    font-size: 15px;
    line-height: 24px;
}
.tray-title span {
    flex: 1;
}
.pin svg {
    width: 10px;
    height: 12px;
}
.close-red {
    width: 12px;
    height: 12px;
    padding: 2px;
    margin-left: 8px;
    background: #c75050;
    color: #fff;
}
.close-red svg {
    width: 8px;
    height: 8px;
}
.tray-body {
    display: flex;
    flex: 1;
    min-height: 0;
}
.panels {
    display: flex;
    flex-direction: column;
    flex: 1;
    min-width: 0;
    border-right: 1px solid #fff;
}
.panel-head {
    display: flex;
    align-items: center;
    flex: none;
    height: 23px;
    padding: 0 3px 2px 9px;
    border: 1px solid #aaa;
    background: linear-gradient(#eee, #b8b8b8);
    font-size: 16px;
    line-height: 20px;
}
.tri {
    width: 0;
    margin-right: 7px;
    border: 5px solid transparent;
    border-top: 8px solid #000;
    border-bottom: 0;
}
.panel-head button {
    display: flex;
    align-items: center;
    justify-content: center;
    width: 16px;
    height: 16px;
    margin-left: auto;
    background: #eee;
    border: 1px solid #999;
}
.panel-head svg {
    width: 7px;
    height: 7px;
}
.entity {
    display: flex;
    flex: none;
    justify-content: space-between;
    align-items: flex-start;
    height: 182px;
    padding: 8px 8px 0 2px;
}
.entity p {
    width: 246px;
    height: 25px;
    padding-left: 9px;
    border-bottom: 1px solid #999;
    font-weight: bold;
    line-height: 18px;
}
.toggle {
    width: 12px;
    height: 18px;
}
.material {
    display: flex;
    flex: none;
    align-items: flex-start;
    gap: 3px;
    height: 93px;
    padding: 2px;
    border-bottom: 1px solid #999;
}
.preview {
    width: 77px;
    height: 87px;
    padding-top: 5px;
    border: 1px solid #999;
}
.half {
    height: 75px;
    background: linear-gradient(to top right, #a3b2ba 50%, #fff 51%);
}
.material input {
    flex: 1;
    min-width: 0;
    height: 23px;
    padding: 0 3px 2px;
    border: 1px solid #fff;
    border-top: 2px solid #777;
    border-left: 2px solid #777;
    color: #888;
}
.material-side {
    display: flex;
    flex-direction: column;
    align-items: center;
    width: 27px;
    gap: 9px;
    padding-top: 4px;
}
.newmat {
    width: 22px;
    height: 22px;
}
.half.small {
    width: 26px;
    height: 26px;
}
.tabs {
    display: flex;
    flex: none;
    align-items: flex-end;
    height: 30px;
}
.tab {
    width: 46px;
    height: 20px;
    padding: 0 0 3px 5px;
    border-top: 1px solid #fff;
    border-right: 2px solid #777;
    text-align: left;
    line-height: 16px;
}
.tab.active {
    width: 51px;
    height: 22px;
    padding: 0 0 5px 7px;
    border-left: 1px solid #fff;
}
.dropper {
    width: 22px;
    height: 22px;
    margin: 0 4px 3px auto;
}
.nav {
    display: flex;
    flex: none;
    align-items: center;
    height: 36px;
    padding: 3px 6px 0 6px;
    gap: 8px;
    border-bottom: 1px solid #999;
}
.nav svg {
    margin-bottom: 6px;
}
.arrow {
    width: 19px;
    height: 18px;
}
.flip {
    transform: scaleX(-1);
}
.home {
    width: 21px;
    height: 21px;
}
.combo {
    display: flex;
    flex: 1;
    min-width: 0;
    height: 27px;
    border: 1px solid #fff;
    border-top: 2px solid #777;
    border-left: 2px solid #777;
    background: #fff;
}
.combo select {
    flex: 1;
    min-width: 0;
    margin: 0 4px 1px 3px;
    appearance: none;
}
.combo.line select {
    border-bottom: 1px solid #000;
}
.drop {
    display: flex;
    align-items: center;
    justify-content: center;
    width: 20px;
    background: #f0f0f0;
    border-right: 2px solid #777;
    border-bottom: 2px solid #777;
}
.drop::before {
    content: "";
    border: 5px solid transparent;
    border-top: 5px solid #000;
    border-bottom: 0;
}
.detail {
    width: 18px;
    height: 18px;
}
.list {
    display: flex;
    overflow: hidden;
    background: #fff;
}
.colors {
    flex: 1;
    min-height: 0;
}
.folders {
    flex: none;
    height: 81px;
}
.cells {
    display: grid;
    grid-template-columns: repeat(3, 62px);
    grid-auto-rows: 62px;
    flex: 1;
    gap: 2px;
    padding: 2px 3px;
}
.cell {
    padding: 1px;
    border: 1px solid #999;
    background: #fff;
}
.color {
    display: block;
    height: 100%;
}
.folder {
    display: flex;
    flex-direction: column;
    align-items: center;
    padding-top: 12px;
}
.folder svg {
    width: 38px;
    height: 32px;
}
.folder span {
    align-self: flex-start;
    margin-top: -4px;
    padding: 0 2px;
    background: #fff;
    line-height: 16px;
}
.split-bar {
    flex: none;
    height: 9px;
    border-bottom: 1px solid #999;
    background: linear-gradient(#f0f0f0 4px, #777 4px, #777 6px, #f0f0f0 6px);
}
.sub-head {
    flex: none;
    height: 23px;
    padding-left: 4px;
    border-bottom: 1px solid #aaa;
    background: #e4e4e4;
    line-height: 22px;
}
.scroll {
    display: flex;
    flex-direction: column;
    align-items: center;
    flex: none;
    width: 20px;
    padding: 8px 0;
    background: #f0f0f0;
}
.scroll svg {
    width: 10px;
    height: 6px;
}
.thumb {
    width: 19px;
    height: 21px;
    margin-top: 7px;
    background: #cdcdcd;
}
.scroll .down {
    margin-top: auto;
    transform: scaleY(-1);
}
.outer {
    padding-top: 10px;
}

/* status bar */
.status {
    display: flex;
    align-items: center;
    flex: none;
    height: 26px;
    padding: 8px 5px 0 7px;
    background: #f0f0f0;
    font-size: 17px;
    line-height: 18px;
    overflow: hidden;
}
.status svg {
    width: 18px;
    height: 18px;
    margin-right: 17px;
}
.status svg:nth-of-type(3) {
    margin-right: 12px;
}
.status p {
    flex: 1;
    padding-left: 11px;
    border-left: 1px solid #999;
}
.status label {
    padding: 0 9px 0 10px;
    border-left: 1px solid #777;
}
.status input {
    align-self: flex-end;
    width: 250px;
    height: 23px;
    padding: 4px 0 0 3px;
    border: 1px solid #a9b6cc;
    border-bottom: none;
    font-size: 15px;
}
```
